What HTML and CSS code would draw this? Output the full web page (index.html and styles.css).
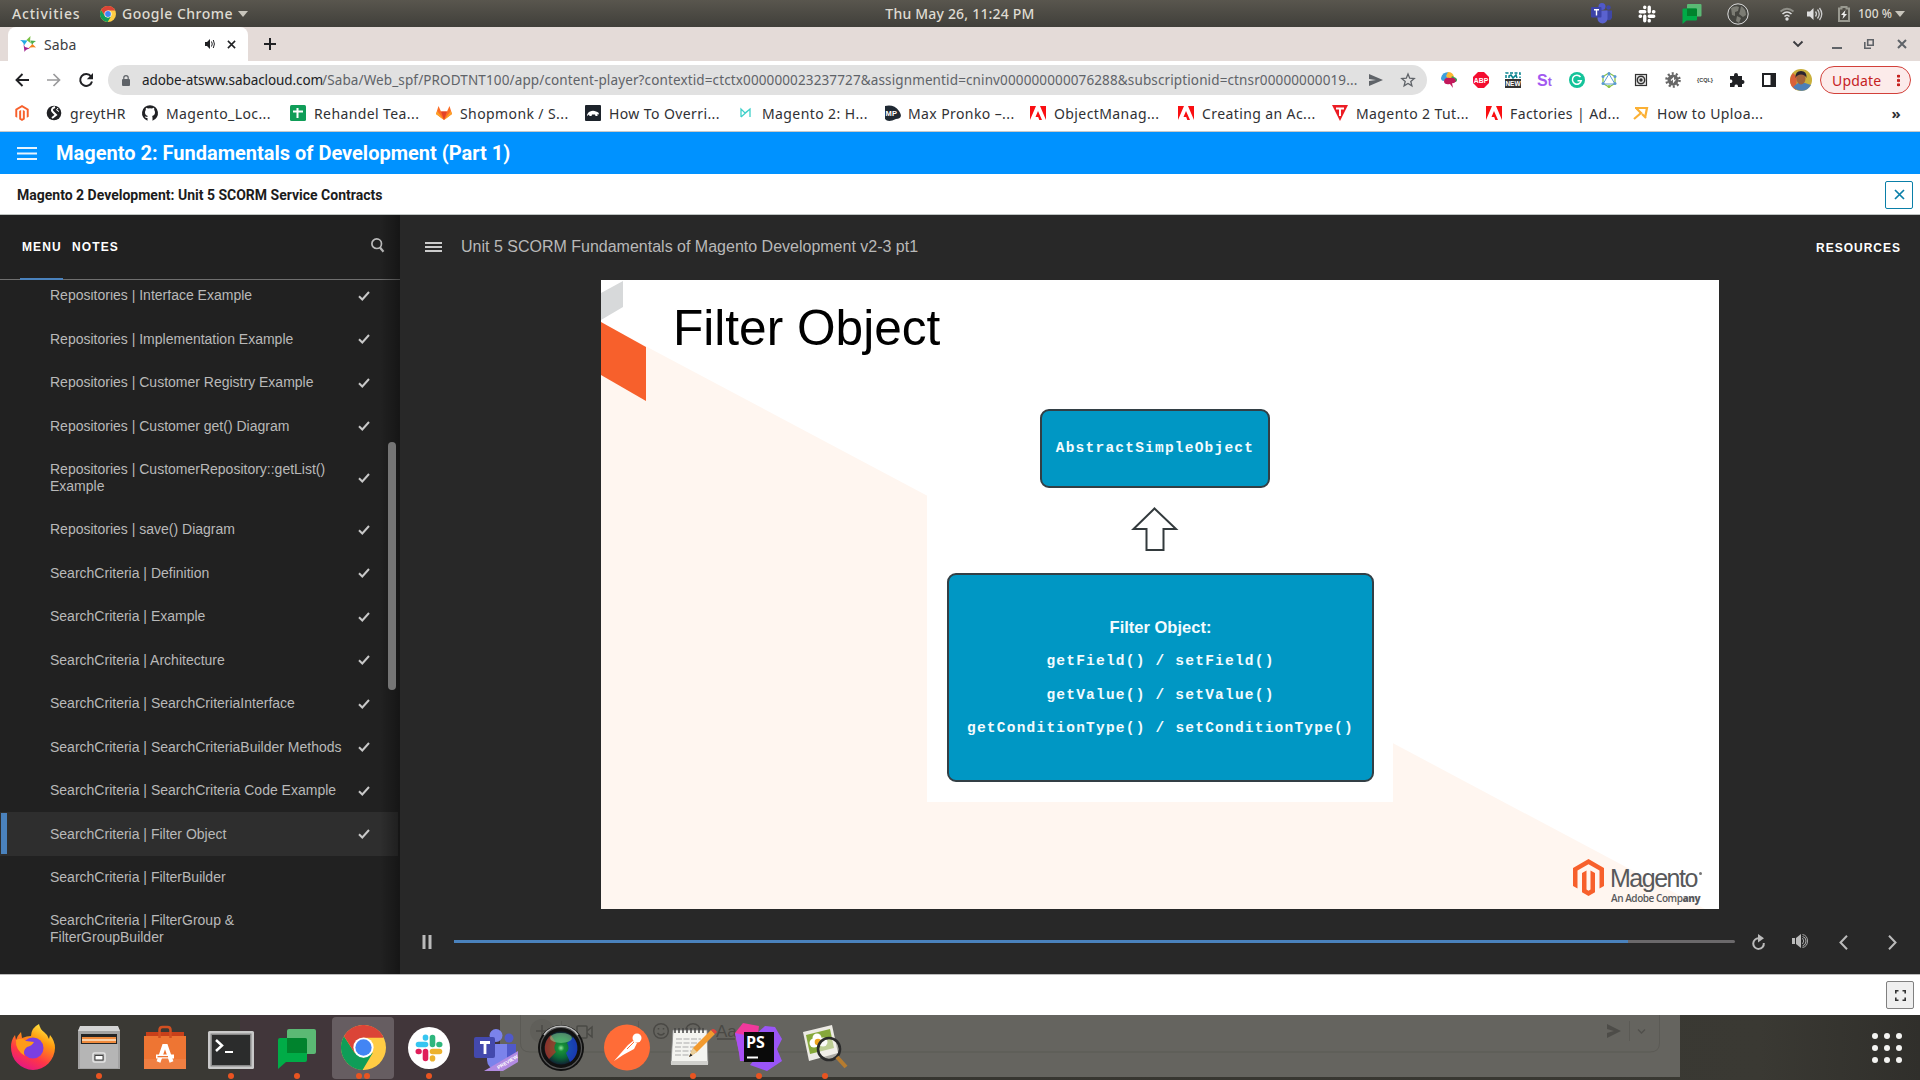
FILE: index.html
```html
<!DOCTYPE html>
<html lang="en">
<head>
<meta charset="utf-8">
<title>Saba</title>
<link rel="stylesheet" href="styles.css">
</head>
<body>
<svg class="defs" width="0" height="0">
  <defs>
    <symbol id="chrome" viewBox="0 0 48 48"><circle cx="24" cy="24" r="24" fill="#fc4"/><path d="M3.200 12A24 24 0 0 0 23 48L34 29.500 24 35 14.500 29.500Z" fill="#0f9d58"/><path d="M3.200 12A24 24 0 0 1 44.800 12V13.500H24L14.500 29.500Z" fill="#db4437"/><circle cx="24" cy="24" r="10.800" fill="#fff"/><circle cx="24" cy="24" r="8.700" fill="#4285f4"/></symbol>
    <symbol id="magento" viewBox="0 0 31 37"><path d="M15.500 0L31 9V27L26.500 29.600V11.500L15.500 5.200 4.500 11.500V29.600L0 27V9Z" fill="#f7602c"/><path d="M9 14L13.500 11.500V30.500L15.500 31.800 17.500 30.500V11.500L22 14V33.200L15.500 37 9 33.200Z" fill="#f7602c"/></symbol>
    <symbol id="adobe" viewBox="0 0 16 16"><path d="M0 1H6L0 15ZM10 1H16V15ZM8 6L12 15H9.300L8.200 12H5.500Z" fill="#fa0f12"/></symbol>
    <symbol id="slack" viewBox="0 0 28 28"><g stroke-width="5.600" stroke-linecap="round"><path d="M10.500 10.500H3.500M10.500 4V3.300" stroke="#36c5f0"/><path d="M17.500 10.500V3.500M24 10.500H24.700" stroke="#2eb67d"/><path d="M17.500 17.500H24.500M17.500 24V24.700" stroke="#ecb22e"/><path d="M10.500 17.500V24.500M4 17.500H3.300" stroke="#e01e5a"/></g></symbol>
    <symbol id="slack-white" viewBox="0 0 28 28"><path d="M10.500 10.500H3.500M10.500 4V3.300M17.500 10.500V3.500M24 10.500H24.700M17.500 17.500H24.500M17.500 24V24.700M10.500 17.500V24.500M4 17.500H3.300" stroke="#fff" stroke-width="5.200" stroke-linecap="round"/></symbol>
    <symbol id="chat" viewBox="0 0 38 40"><rect x="9" y="0" width="29" height="25" rx="2" fill="#5bb974"/><path d="M0 11Q0 9 2 9H27Q29 9 29 11V31Q29 33 27 33H8L0 40Z" fill="#00ac47"/><path d="M9 9H27Q29 9 29 11V24H9Z" fill="#00832d"/></symbol>
    <symbol id="teams" viewBox="0 0 44 44"><circle cx="35" cy="9" r="4.500" fill="#5059c9"/><path d="M29 15H42V29A7 7 0 0 1 29 31Z" fill="#5059c9"/><circle cx="22" cy="6.500" r="6.500" fill="#7b83eb"/><path d="M13 15H33V31A10 10 0 0 1 13 31Z" fill="#7b83eb"/><rect x="0" y="8" width="21" height="21" rx="2" fill="#4349ad"/><path d="M6 13.500H16M11 13.500V25" stroke="#fff" stroke-width="2.800"/></symbol>
    <symbol id="teams-tray" viewBox="0 0 44 44"><circle cx="35" cy="9" r="4.500" fill="#3f47a6"/><path d="M29 15H42V29A7 7 0 0 1 29 31Z" fill="#3f47a6"/><circle cx="22" cy="7" r="7" fill="#5059c9"/><path d="M13 15H33V31A10 10 0 0 1 13 31Z" fill="#5a62cf"/><rect x="0" y="8" width="21" height="21" rx="2" fill="#3d44a8"/><path d="M6 13.500H16M11 13.500V25" stroke="#fff" stroke-width="2.800"/></symbol>
    <symbol id="tick" viewBox="0 0 12 10"><path d="M1 5.200L4.300 8.500 11 1" fill="none" stroke="#c8c8c8" stroke-width="2"/></symbol>
  </defs>
</svg>

<header class="topbar">
  <div class="topbar-left"><span class="activities">Activities</span><svg class="i16"><use href="#chrome"/></svg><span class="appname">Google Chrome</span><i class="caret"></i></div>
  <div class="clock">Thu May 26, 11:24 PM</div>
  <div class="topbar-right">
    <svg class="s-teams"><use href="#teams-tray"/></svg>
    <svg class="s-slack"><use href="#slack-white"/></svg>
    <svg class="s-chat"><use href="#chat"/></svg>
    <svg class="s-globe" viewBox="0 0 22 22"><circle cx="11" cy="11" r="10.200" fill="#454540" stroke="#ddd"/><path d="M4 5Q9 2 12 4L11 8 8 9 8 13 5 12ZM14 3Q19 6 19 12L16 14 12 11 13 8ZM10 13L14 15 12 20 9 18Z" fill="#7c7c74"/></svg>
    <svg class="s-wifi" viewBox="0 0 14 14"><path d="M.5 4.500Q7-1 13.500 4.500" fill="none" stroke="#8f8f88" stroke-width="1.800"/><path d="M2.500 7Q7 3 11.500 7M4.500 9.500Q7 7 9.500 9.500" fill="none" stroke="#ddd" stroke-width="1.600"/><circle cx="7" cy="12" r="1.700" fill="#ddd"/></svg>
    <svg class="s-vol" viewBox="0 0 16 14"><path d="M0 4.500H3L6.500 1V13L3 9.500H0Z" fill="#ddd"/><path d="M8.500 4.500Q10.500 7 8.500 9.500M10.500 2.500Q14 7 10.500 11.500M12.500 1Q17 7 12.500 13" fill="none" stroke="#ccc" stroke-width="1.300"/></svg>
    <svg class="s-bat" viewBox="0 0 12 16"><path d="M1 2.500H3.500V1H8.500V2.500H11V15H1Z" fill="none" stroke="#999990" stroke-width="2"/><path d="M7.500 4L3 9H5.500L4.500 13 9 8H6.500Z" fill="#eee"/></svg>
    <span class="pct">100 %</span><i class="caret"></i>
  </div>
</header>

<div class="tabstrip">
  <div class="tab">
    <svg class="i16" viewBox="0 0 16 16"><path d="M0 4L7.500 4.500 4 9.500Q4 6.500 0 4Z" fill="#23a9e1"/><path d="M6.500 4L10.500 0Q9.500 4 11 7.500Z" fill="#7ac143"/><path d="M10.500 4.500L16 5Q13 6.500 12 9Z" fill="#4cae4c"/><path d="M16 11.500Q12 10.500 8 12.500L12.500 8Z" fill="#f58220"/><path d="M3.500 8L4.500 16Q5.500 13 10 12.500L5 11Z" fill="#a3238e"/></svg>
    <span class="tab-title">Saba</span>
    <svg class="tab-audio" viewBox="0 0 10 10"><path d="M0 3H2L5 0V10L2 7H0Z" fill="#202124"/><path d="M6.500 2.500Q8 5 6.500 7.500M8.300 1Q10.500 5 8.300 9" fill="none" stroke="#202124"/></svg>
    <svg class="tab-close" viewBox="0 0 10 10"><path d="M1 1L9 9M9 1L1 9" stroke="#202124" stroke-width="1.700"/></svg>
  </div>
  <svg class="newtab" viewBox="0 0 12 12"><path d="M6 0V12M0 6H12" stroke="#202124" stroke-width="2"/></svg>
  <div class="winctl">
    <svg class="w-chev" viewBox="0 0 12 8"><path d="M1.500 1.500L6 6 10.500 1.500" fill="none" stroke="#3c3c40" stroke-width="1.900"/></svg>
    <svg class="w-b" viewBox="0 0 10 10"><path d="M0 9H10" stroke="#5f6368" stroke-width="2"/></svg>
    <svg class="w-b" viewBox="0 0 10 10"><path d="M3.700.8H9.200V6.200H3.700ZM.8 3V9.200H7" fill="none" stroke="#5f6368" stroke-width="1.600"/></svg>
    <svg class="w-b" viewBox="0 0 10 10"><path d="M1 1L9 9M9 1L1 9" stroke="#5f6368" stroke-width="2"/></svg>
  </div>
</div>

<div class="toolbar">
  <svg class="nav" viewBox="0 0 14 14"><path d="M14 7H1.500M7.500 1L1.500 7 7.500 13" fill="none" stroke="#202124" stroke-width="1.900"/></svg>
  <svg class="nav" viewBox="0 0 14 14"><path d="M0 7H12.500M6.500 1L12.500 7 6.500 13" fill="none" stroke="#9a9a9c" stroke-width="1.700"/></svg>
  <svg class="nav" viewBox="0 0 14 14"><path d="M12 3.300A6 6 0 1 0 13 8.500" fill="none" stroke="#202124" stroke-width="2"/><path d="M14 0V6.200H7.800Z" fill="#202124"/></svg>
  <div class="omnibox">
    <svg class="lock" viewBox="0 0 8 11"><rect y="4" width="8" height="7" rx="1" fill="#5f6368"/><path d="M1.800 4V2.800A2.200 2.200 0 0 1 6.200 2.800V4" fill="none" stroke="#5f6368" stroke-width="1.200"/></svg>
    <span class="host">adobe-atsww.sabacloud.com</span><span class="path">/Saba/Web_spf/PRODTNT100/app/content-player?contextid=ctctx000000023237727&amp;assignmentid=cninv000000000076288&amp;subscriptionid=ctnsr00000000019...</span>
    <svg class="send" viewBox="0 0 14 12"><path d="M0 0L14 6 0 12V7L7 6 0 5Z" fill="#5f6368"/></svg>
    <svg class="star" viewBox="0 0 14 14"><path d="M7 1L8.700 5.200 13.200 5.500 9.800 8.400 10.900 12.800 7 10.400 3.100 12.800 4.200 8.400.8 5.500 5.300 5.200Z" fill="none" stroke="#5f6368" stroke-width="1.300"/></svg>
  </div>
  <div class="exts">
    <svg viewBox="0 0 16 16"><path d="M0 6Q1 0 8 0V5L3 9Q0 9 0 6" fill="#3d9fdc"/><path d="M7 0Q12 0 13 5L8 8 5 4Z" fill="#fdb833"/><path d="M13 5Q18 7 15 10H9L11 4Z" fill="#3aa757"/><path d="M3 9Q4 5 9 6Q14 5 15 9Q13 12 11 11L12 16 9 12Q3 13 3 9" fill="#c2185b"/></svg>
    <svg viewBox="0 0 16 16"><path d="M5 0H11L16 5V11L11 16H5L0 11V5Z" fill="#f40d30"/><text x="8" y="10.800" class="t-abp">ABP</text></svg>
    <svg viewBox="0 0 16 16"><path d="M1 6V1H15V6" fill="none" stroke="#07838f" stroke-dasharray="3 1.500" stroke-width="1.500"/><path d="M4 6V4L6 3 8 6 11 3 12 6" fill="none" stroke="#07838f" stroke-width="1.500"/><rect y="7" width="16" height="9" fill="#333"/><text x="8" y="14.200" class="t-new">NEW</text></svg>
    <svg viewBox="0 0 16 16"><text x="0" y="13.500" class="t-st">S<tspan font-size="12">t</tspan></text></svg>
    <svg viewBox="0 0 16 16"><circle cx="8" cy="8" r="8" fill="#15c39a"/><path d="M11.500 5A4.500 4.500 0 1 0 12.300 8.700H8.500" fill="none" stroke="#fff" stroke-width="1.500"/></svg>
    <svg viewBox="0 0 16 16"><path d="M8 1L14 4.500V11.500L8 15 2 11.500V4.500Z" fill="none" stroke="#8bc34a" stroke-width="1.300"/><path d="M8 2L14 12H2Z" fill="none" stroke="#5a9bd5"/><g fill="#5a9bd5"><circle cx="8" cy="1.500" r="1.500"/><circle cx="14" cy="4.500" r="1.500"/><circle cx="2" cy="4.500" r="1.500"/><circle cx="2" cy="11.500" r="1.500"/><circle cx="14" cy="11.500" r="1.500"/></g><circle cx="8" cy="14.500" r="1.500" fill="#8bc34a"/></svg>
    <svg viewBox="0 0 16 16"><rect x="2.500" y="2.500" width="11" height="11" fill="#e8e8e8" stroke="#333" stroke-width="1.200"/><circle cx="8" cy="8" r="3.700" fill="none" stroke="#333" stroke-width="1.500"/><circle cx="8" cy="8" r="1.700" fill="#333"/></svg>
    <svg viewBox="0 0 16 16"><circle cx="8" cy="8" r="6.500" fill="none" stroke="#666" stroke-width="2.600" stroke-dasharray="2 2.080"/><circle cx="8" cy="8" r="5.500" fill="#666"/><path d="M6 8.500L8.500 6V10L10.500 7.500" fill="none" stroke="#fff" stroke-width="1.100"/></svg>
    <svg viewBox="0 0 16 16"><text x="8" y="10" class="t-cql">{CQL}</text></svg>
    <svg viewBox="0 0 16 16"><path d="M1 4H5V3A2 2 0 0 1 9 3V4H13V8H13.500A2 2 0 0 1 13.500 12H13V15H9V14A1.800 1.800 0 0 0 5.500 14V15H1V11H2A1.800 1.800 0 0 0 2 7.500H1Z" fill="#202124"/></svg>
    <svg viewBox="0 0 16 16"><path d="M2 2H14V14H2Z" fill="none" stroke="#202124" stroke-width="2"/><path d="M9.500 2H14V14H9.500Z" fill="#202124"/></svg>
    <svg class="avatar" viewBox="0 0 22 22"><circle cx="11" cy="11" r="11" fill="#c9b03c"/><path d="M0 11A11 11 0 0 0 6 21L7 8 3 4A11 11 0 0 0 0 11" fill="#d9603a"/><path d="M3 18L8 14 15 14 21 16A11 11 0 0 1 3 18" fill="#4d7fb8"/><ellipse cx="11" cy="9.500" rx="4.500" ry="6" fill="#a3653c"/><path d="M5.500 9Q5 2 11 2T16.500 9Q15 5.500 11 5.500T5.500 9" fill="#2a2430"/></svg>
  </div>
  <div class="update"><span>Update</span><i class="dots"></i></div>
</div>

<nav class="bookmarks">
  <a><svg class="bm-mag"><use href="#magento"/></svg></a>
  <a><svg viewBox="0 0 16 16"><circle cx="8" cy="8" r="7.300" fill="#202124"/><path d="M9 2Q4 4 7 7T10 10 6 13" fill="none" stroke="#fff" stroke-width="2"/><path d="M12 3L10.500 5 13 6.500" stroke="#fff" fill="none"/></svg><span>greytHR</span></a>
  <a><svg viewBox="0 0 16 16"><path d="M8 .2A8 8 0 0 0 5.500 15.800V13Q3.500 13.400 2.700 11.500 3.600 11.300 5.500 12Q5 11.500 5.900 11Q3 10.500 3 7.300 3 6 3.800 5 3.500 4 4 2.700 5 2.800 6 3.500 8 3 10 3.500 11 2.800 12 2.700 12.500 4 12.200 5 13 6 13 7.300 13 10.500 10.100 11 10.500 11.500 10.500 13V15.800A8 8 0 0 0 8 .2" fill="#202124"/></svg><span>Magento_Loc...</span></a>
  <a><svg viewBox="0 0 16 16"><rect width="16" height="16" rx="1.500" fill="#0f9d58"/><path d="M7.500 3V13M3 6.500H13" stroke="#fff" stroke-width="2"/></svg><span>Rehandel Tea...</span></a>
  <a><svg viewBox="0 0 16 16"><path d="M8 15L0 9 2.500 1 5 6.500H11L13.500 1 16 9Z" fill="#fc6d26"/><path d="M8 15L5 6.500H11Z" fill="#e24329"/><path d="M0 9L1.200 6 8 15ZM16 9L14.800 6 8 15Z" fill="#fca326"/></svg><span>Shopmonk / S...</span></a>
  <a><svg viewBox="0 0 16 16"><rect width="16" height="16" rx="1" fill="#1d232b"/><path d="M2 11Q2 8 5 6.500T11 6.500Q14 7 14 9.500L12.500 9V11H10.500L10 9.500H7L6.500 11H4.500L4 9.500Z" fill="#fff"/></svg><span>How To Overri...</span></a>
  <a><svg viewBox="0 0 16 16"><path d="M3 12V4L7 8 12 4V12M3 12L12 4" fill="none" stroke="#3fd0c9" stroke-width="1.300"/></svg><span>Magento 2: H...</span></a>
  <a><svg viewBox="0 0 16 16"><path d="M1 1Q10-1 15 6T12 14Q4 18 1 14Z" fill="#1f2933"/><text x="7.500" y="11" class="t-mp">MP</text></svg><span>Max Pronko –...</span></a>
  <a><svg><use href="#adobe"/></svg><span>ObjectManag...</span></a>
  <a><svg><use href="#adobe"/></svg><span>Creating an Ac...</span></a>
  <a><svg viewBox="0 0 16 16"><path d="M0 0H16L8 16Z" fill="#ec1c24"/><path d="M4 3.500H12M8 3.500V11" stroke="#fff" stroke-width="2"/></svg><span>Magento 2 Tut...</span></a>
  <a><svg><use href="#adobe"/></svg><span>Factories | Ad...</span></a>
  <a><svg viewBox="0 0 16 16"><path d="M2 3H14L12 13M1 14L8 8 3.500 3.500M9 9L13 13" fill="none" stroke="#fbb034" stroke-width="2.200"/></svg><span>How to Uploa...</span></a>
  <span class="more">»</span>
</nav>

<div class="course-bar">
  <svg class="burger4" viewBox="0 0 20 13"><path d="M0 1H20M0 6.500H20M0 12H20" stroke="#e6f4ff" stroke-width="2"/></svg>
  <h1>Magento 2: Fundamentals of Development (Part 1)</h1>
</div>
<div class="unit-bar">
  <h2>Magento 2 Development: Unit 5 SCORM Service Contracts</h2>
  <button class="close-btn"><svg viewBox="0 0 11 11"><path d="M1 1L10 10M10 1L1 10" stroke="#0a7fa8" stroke-width="1.700"/></svg></button>
</div>

<main class="player">
  <aside class="sidebar">
    <div class="side-head">
      <span class="stab on">MENU</span><span class="stab">NOTES</span>
      <svg class="search" viewBox="0 0 14 15"><circle cx="5.700" cy="5.700" r="4.800" fill="none" stroke="#bbb" stroke-width="1.700"/><path d="M9 9.500L12.500 13.700" stroke="#bbb" stroke-width="2.200"/></svg>
    </div>
    <div class="side-scroll">
      <ul class="items">
        <li><span>Repositories | Interface Example</span><svg><use href="#tick"/></svg></li>
        <li><span>Repositories | Implementation Example</span><svg><use href="#tick"/></svg></li>
        <li><span>Repositories | Customer Registry Example</span><svg><use href="#tick"/></svg></li>
        <li><span>Repositories | Customer get() Diagram</span><svg><use href="#tick"/></svg></li>
        <li><span>Repositories | CustomerRepository::getList() Example</span><svg><use href="#tick"/></svg></li>
        <li><span>Repositories | save() Diagram</span><svg><use href="#tick"/></svg></li>
        <li><span>SearchCriteria | Definition</span><svg><use href="#tick"/></svg></li>
        <li><span>SearchCriteria | Example</span><svg><use href="#tick"/></svg></li>
        <li><span>SearchCriteria | Architecture</span><svg><use href="#tick"/></svg></li>
        <li><span>SearchCriteria | SearchCriteriaInterface</span><svg><use href="#tick"/></svg></li>
        <li><span>SearchCriteria | SearchCriteriaBuilder Methods</span><svg><use href="#tick"/></svg></li>
        <li><span>SearchCriteria | SearchCriteria Code Example</span><svg><use href="#tick"/></svg></li>
        <li class="current"><span>SearchCriteria | Filter Object</span><svg><use href="#tick"/></svg></li>
        <li><span>SearchCriteria | FilterBuilder</span></li>
        <li><span>SearchCriteria | FilterGroup &amp;<br>FilterGroupBuilder</span></li>
      </ul>
    </div>
    <i class="side-shade"></i>
    <i class="side-thumb"></i>
  </aside>
  <section class="stage">
    <div class="stage-head">
      <svg class="burger3" viewBox="0 0 17 10"><path d="M0 1H17M0 5H17M0 9H17" stroke="#ccc" stroke-width="2"/></svg>
      <span class="stage-title">Unit 5 SCORM Fundamentals of Magento Development v2-3 pt1</span>
      <span class="resources">RESOURCES</span>
    </div>
    <div class="slide">
      <svg class="slide-bg" viewBox="0 0 1118 629"><path d="M0 42.400L1104 629H0Z" fill="#fff6f0"/><path d="M326 100H792V522H326Z" fill="#fff"/><path d="M0 13L22 1V27L0 40Z" fill="#d7d9da"/><path d="M0 42L45 67V121L0 95Z" fill="#f7602c"/><path d="M553.500 228.500L575 249H562.500V270H545.500V249H532.500Z" fill="#fff" stroke="#333a3d" stroke-width="2"/></svg>
      <h3 class="slide-title">Filter Object</h3>
      <div class="node node-a">AbstractSimpleObject</div>
      <div class="node node-b"><b>Filter Object:</b><p>getField() / setField()</p><p>getValue() / setValue()</p><p>getConditionType() / setConditionType()</p></div>
      <div class="brand">
        <svg class="brand-mark"><use href="#magento"/></svg>
        <div class="brand-text"><span class="brand-name">Magento<i></i></span><span class="brand-sub">An Adobe Comp<b>any</b></span></div>
      </div>
    </div>
    <div class="controls">
      <svg class="c-pause" viewBox="0 0 10 14"><path d="M2 0V14M8 0V14" stroke="#bbb" stroke-width="3"/></svg>
      <div class="track"><i></i></div>
      <svg class="c-replay" viewBox="0 0 13 16"><path d="M7 4.300A5.300 5.300 0 1 0 11.800 9" fill="none" stroke="#bbb" stroke-width="2"/><path d="M6 0L12 4.300 6 8.500Z" fill="#bbb"/></svg>
      <svg class="c-vol" viewBox="0 0 16 14"><path d="M0 4H3V10H0ZM4 4L9 0V14L4 10Z" fill="#bbb"/><path d="M10.500 4Q13 7 10.500 10M10.500 .5Q15.500 1.500 15.500 7T10.500 13.500M10.500 2.500Q14 3 14 7T10.500 12" fill="none" stroke="#aaa"/></svg>
      <svg class="c-arr" viewBox="0 0 9 15"><path d="M8 .8L1.500 7.500 8 14.200" fill="none" stroke="#bbb" stroke-width="2"/></svg>
      <svg class="c-arr" viewBox="0 0 9 15"><path d="M1 .8L7.500 7.500 1 14.200" fill="none" stroke="#bbb" stroke-width="2"/></svg>
    </div>
  </section>
</main>

<footer class="foot-bar"><button class="full-btn"><svg viewBox="0 0 11 11"><path d="M.8 3.500V.8H3.500M7.500.8H10.200V3.500M10.200 7.500V10.200H7.500M3.500 10.200H.8V7.500" fill="none" stroke="#333" stroke-width="1.600"/></svg></button></footer>

<div class="dock">
  <svg class="ghost" viewBox="0 0 1180 62"><path d="M20.500 0V28Q20.500 37 30 37H1150Q1159.500 37 1159.500 28V0" fill="none" stroke="#5b5a55"/><circle cx="42" cy="16" r="12" fill="#605f5a"/><g fill="none" stroke="#4a4945" stroke-width="1.500"><path d="M36 16H48M42 10V22"/><rect x="77" y="11" width="10" height="12" rx="1"/><path d="M87 16L92 12V22L87 18"/><circle cx="161" cy="16" r="7.300"/><path d="M157.500 18Q161 22 164.500 18M158.500 13V14.500M163.500 13V14.500"/><circle cx="193" cy="16" r="7.300"/><path d="M217 24H235"/></g><path d="M61.500 6V26M138.500 6V26M1129.500 6V26" stroke="#5b5a55"/><text x="216" y="22" class="t-aa">Aa</text><path d="M1107 9L1121 16 1107 23V18L1114 16 1107 14Z" fill="#4d4c48"/><path d="M1138 14.500L1141.500 18 1145 14.500" fill="none" stroke="#504f4b" stroke-width="1.300"/></svg>
  <div class="dock-items">
    <div><svg viewBox="0 0 48 48"><defs><linearGradient id="ff" x1="0.800" y1="0" x2="0.300" y2="1"><stop offset="0" stop-color="#fff14a"/><stop offset=".35" stop-color="#ff980e"/><stop offset=".7" stop-color="#ff3647"/><stop offset="1" stop-color="#e31587"/></linearGradient></defs><path d="M24 47A22.500 22.500 0 0 1 2 24Q2 17 6 12L7 17Q8 13 12 9L13 15Q18 13 22 13Q22 5 30 1Q31 6 35 9T40 16L41 12Q46 18 46 25A22.500 22.500 0 0 1 24 47" fill="url(#ff)"/><circle cx="24" cy="25" r="10.500" fill="#7b3fe0"/><path d="M7 17Q13 14 17 18L25 19Q23 23 18 24 13 28 16 33Q6 27 7 17" fill="#ff9b1a"/></svg></div>
    <div class="run"><svg viewBox="0 0 48 48"><path d="M5 4H43L45 8V46H3V8Z" fill="#a3a3a3"/><path d="M5 3H43L45 8H3Z" fill="#d4d4d4"/><rect x="6" y="11" width="36" height="11" fill="#252525"/><path d="M7 14H41V20H7Z" fill="#f08a3c"/><path d="M7 17H41" stroke="#fbe6cc" stroke-width="1.500"/><path d="M5 21H43V45H5Z" fill="#b5b5b5"/><rect x="18" y="30" width="12" height="9" rx="1.500" fill="#9a9a9a" stroke="#e4e4e4" stroke-width="1.600"/><path d="M20 32.500H28V37H20Z" fill="#fff" stroke="#444"/></svg></div>
    <div><svg viewBox="0 0 48 48"><path d="M5 9H43V16H5Z" fill="#c8401a"/><path d="M3 13H45V46H3Z" fill="#ee7533"/><path d="M3 36H45V46H3Z" fill="#f07f42"/><path d="M18.500 15V7Q18.500 4 21.500 4H26.500Q29.500 4 29.500 7V15" fill="none" stroke="#d24f21" stroke-width="2.500"/><path d="M17.500 39L23 23H25L30.500 39" fill="none" stroke="#fff" stroke-width="4"/><path d="M15 31.500H33V35.500H15Z" fill="#fff"/><path d="M16.500 33H27V34.300H16.500Z" fill="#ee7533"/></svg></div>
    <div class="run"><svg viewBox="0 0 48 48"><rect x="1" y="8" width="46" height="38" rx="1.500" fill="#c9c9c9"/><rect x="3.500" y="10.500" width="41" height="33" fill="#888"/><rect x="5" y="12" width="38" height="30" fill="#2b2c2c"/><path d="M9 17L15 22.500 9 28" fill="none" stroke="#fff" stroke-width="2.500"/><path d="M18 29H26" stroke="#fff" stroke-width="2"/></svg></div>
    <div class="run"><svg class="d-chat"><use href="#chat"/></svg></div>
    <div class="run two active"><svg class="d-chrome"><use href="#chrome"/></svg></div>
    <div class="run"><span class="slack-disc"><svg><use href="#slack"/></svg></span></div>
    <div><svg viewBox="0 0 48 48"><use href="#teams" x="3" y="6" width="44" height="44"/><path d="M13 48L47 28V39L32 48Z" fill="#b28be2"/><text class="t-prev" transform="translate(27.500 46.500) rotate(-31)">PREVIEW</text></svg></div>
    <div><svg viewBox="0 0 48 48"><defs><radialGradient id="lens"><stop offset="0" stop-color="#8ee59b"/><stop offset=".2" stop-color="#188f38"/><stop offset=".6" stop-color="#0b6a38"/><stop offset="1" stop-color="#123"/></radialGradient></defs><circle cx="24" cy="25" r="23" fill="#111"/><circle cx="24" cy="25" r="20.500" fill="none" stroke="#555" stroke-width="1.200"/><path d="M7 12A21 21 0 0 1 41 12" fill="none" stroke="#bbb" stroke-width="1.500"/><circle cx="24" cy="25" r="16.500" fill="url(#lens)"/><path d="M14 12A16.500 16.500 0 0 0 12 36L19 29A7 7 0 0 1 19 20Z" fill="#b3362a" opacity=".75"/><path d="M36 14A16.500 16.500 0 0 1 33 39L29 30A7 7 0 0 0 30 20Z" fill="#1b3fd0" opacity=".8"/><ellipse cx="24" cy="15" rx="11" ry="5" fill="#8fe0a0" opacity=".5"/></svg></div>
    <div><svg viewBox="0 0 48 48"><circle cx="24" cy="24.500" r="23" fill="#ff6c37"/><path d="M11 38L25 22 30 18 34 20 31 26 20 32Z" fill="#fff"/><circle cx="34" cy="15" r="4.500" fill="#fff"/><path d="M24 26L31 19" stroke="#ff6c37"/></svg></div>
    <div class="run"><svg viewBox="0 0 48 48"><path d="M4 7H38L39 41H2Z" fill="#f4f4f0" stroke="#888" stroke-width=".8"/><path d="M2 38H39V42H2Z" fill="#d0d0cc"/><path d="M6 10V5M10 10V5M14 10V5M18 10V5M22 10V5M26 10V5M30 10V5M34 10V5" stroke="#444" stroke-width="1.500"/><path d="M7 16H32M7 20H30M6 24H27M6 28H24M6 32H23" stroke="#aaa" stroke-dasharray="6 1.500"/><path d="M20 34L24 25 42 7 46 11 28 29Z" fill="#f29a2e"/><path d="M20 34L24 25 28 29Z" fill="#e8cf9c"/><path d="M20 34L21.500 30.500 23.500 32.500Z" fill="#222"/><path d="M42 7Q45 4 48 9L46 11Z" fill="#e0443e"/></svg></div>
    <div class="run"><svg viewBox="0 0 48 48"><path d="M0 10L8 0 24 3 22 20 6 38Z" fill="#f0399c"/><path d="M0 10L10 12V38H5L4 30Z" fill="#a950f5"/><path d="M22 10L30 3 40 4 47 16 42 26 47 38 32 48 15 42 20 36Z" fill="#9a55f7"/><rect x="9" y="9" width="30" height="30" fill="#0a0a0a"/><text x="11" y="25" class="t-ps">PS</text><path d="M12 34.500H23" stroke="#fff" stroke-width="2"/></svg></div>
    <div class="run"><svg viewBox="0 0 48 48"><path d="M2 9L31 2 37 30 8 38Z" fill="#eceae4"/><path d="M5 12L29 6 33 25 9 31Z" fill="#86a83a"/><g fill="#fff"><circle cx="16" cy="15" r="4.500"/><circle cx="22" cy="19" r="4.500"/><circle cx="13" cy="20" r="4.500"/></g><circle cx="17" cy="19" r="3.300" fill="#eda41e"/><circle cx="28" cy="26" r="11" fill="#f6f4ee" fill-opacity=".5" stroke="#2b2b2b" stroke-width="2.600"/><path d="M36 34L45 44" stroke="#b67c30" stroke-width="4"/></svg></div>
  </div>
  <svg class="grid9" viewBox="0 0 30 30"><g fill="#f4f4f2"><circle cx="3" cy="3" r="3"/><circle cx="15" cy="3" r="3"/><circle cx="27" cy="3" r="3"/><circle cx="3" cy="15" r="3"/><circle cx="15" cy="15" r="3"/><circle cx="27" cy="15" r="3"/><circle cx="3" cy="27" r="3"/><circle cx="15" cy="27" r="3"/><circle cx="27" cy="27" r="3"/></g></svg>
</div>
</body>
</html>
```
FILE: styles.css
```css
* { box-sizing: border-box; }
body { margin: 0; width: 1920px; height: 1080px; overflow: hidden; display: flex; flex-direction: column; font-family: "Noto Sans", sans-serif; background: #fff; }
h1, h2, h3, p, ul { margin: 0; padding: 0; }
svg { display: block; flex: none; overflow: visible; }
.defs { position: absolute; }
.i16 { width: 16px; height: 16px; }
button { padding: 0; }

/* system bar */
.topbar { height: 27px; flex: none; display: grid; grid-template-columns: 1fr auto 1fr; align-items: center; background: linear-gradient(#59564e, #403f3a); color: #dfdbd2; font-size: 14px; font-weight: 500; white-space: nowrap; }
.topbar-left { display: flex; align-items: center; padding-left: 12px; }
.activities { width: 88px; letter-spacing: 0.800px; }
.appname { width: 110px; margin-left: 6px; letter-spacing: 0.500px; }
.caret { border: 5px solid transparent; border-top: 6px solid #c8c5bc; border-bottom: 0; margin-left: 6px; }
.clock { font-size: 14px; letter-spacing: 0.200px; }
.topbar-right { display: flex; align-items: center; justify-content: flex-end; padding-right: 15px; }
.s-teams { width: 22px; height: 22px; margin-right: 25px; }
.s-slack { width: 18px; height: 18px; margin-right: 26px; }
.s-chat { width: 20px; height: 20px; margin-right: 25px; }
.s-globe { width: 22px; height: 22px; margin-right: 31px; }
.s-wifi { width: 14px; height: 14px; margin-right: 13px; }
.s-vol { width: 16px; height: 14px; margin-right: 15px; }
.s-bat { width: 12px; height: 16px; margin-right: 8px; }
.pct { width: 33px; font-size: 12px; }
.topbar-right .caret { margin-left: 4px; }

/* tabs */
.tabstrip { height: 34px; flex: none; display: flex; align-items: center; background: #e4dbd8; padding-left: 8px; }
.tab { width: 240px; height: 34px; background: #fff; border-radius: 8px 8px 0 0; display: flex; align-items: center; padding: 0 12px; color: #3c4043; }
.tab-title { flex: 1; margin-left: 8px; font-size: 14px; letter-spacing: 0.100px; }
.tab-audio { width: 10px; height: 10px; margin-right: 12px; }
.tab-close { width: 9px; height: 9px; }
.newtab { width: 12px; height: 12px; margin-left: 16px; }
.winctl { margin-left: auto; display: flex; align-items: center; padding-right: 13px; gap: 22px; }
.w-chev { width: 12px; height: 8px; margin-right: 6px; }
.w-b { width: 10px; height: 10px; }
.w-b:last-child { margin-left: 1px; }

/* toolbar */
.toolbar { height: 38px; flex: none; display: flex; align-items: center; padding: 0 9px 0 15px; }
.nav { width: 14px; height: 14px; margin-right: 18px; }
.nav + .nav + .nav { margin-right: 15px; }
.omnibox { width: 1319px; height: 30px; border-radius: 15px; background: #e1e1e1; display: flex; align-items: center; padding: 0 12px 0 14px; font-size: 13.500px; white-space: nowrap; color: #202124; }
.lock { width: 8px; height: 11px; margin-right: 12px; }
.host { width: 180px; letter-spacing: -0.080px; }
.path { flex: 1; color: #5f6368; letter-spacing: 0.125px; }
.send { width: 14px; height: 12px; margin-right: 18px; }
.star { width: 14px; height: 14px; }
.exts { display: flex; align-items: center; gap: 16px; margin-left: 14px; }
.exts svg { width: 16px; height: 16px; }
.exts .avatar { width: 22px; height: 22px; margin-left: -3px; }
.update { margin-left: auto; width: 91px; height: 28px; border: 1px solid #d2403a; border-radius: 14px; background: #fcebea; color: #c5221f; display: flex; align-items: center; justify-content: space-between; padding: 0 10px 0 11px; font-size: 14px; letter-spacing: 0.200px; }
.dots { width: 3px; height: 13px; background: radial-gradient(circle, #c5221f 1.400px, transparent 1.800px) 0 0 / 3px 4.333px; }
.t-abp { font: bold 6.800px "Liberation Sans", sans-serif; fill: #fff; text-anchor: middle; }
.t-new { font: bold 6.500px "Liberation Sans", sans-serif; fill: #fff; text-anchor: middle; }
.t-st { font: bold 16px "Liberation Sans", sans-serif; fill: #a259f0; }
.t-cql { font: bold 5.500px "Liberation Sans", sans-serif; fill: #444; text-anchor: middle; }
.t-mp { font: bold 7.500px "Liberation Sans", sans-serif; fill: #fff; text-anchor: middle; }

/* bookmarks */
.bookmarks { height: 33px; flex: none; border-bottom: 1px solid #c9c9c9; display: grid; grid-template-columns: 32px 96px 148px 146px 149px 153px 146px 146px 148px 154px 154px 147px 1fr auto; align-items: center; padding: 0 19px 4px 14px; font-size: 14px; letter-spacing: 0.400px; color: #303134; white-space: nowrap; }
.bookmarks a { display: flex; align-items: center; gap: 8px; }
.bookmarks a svg { width: 16px; height: 16px; }
.more { font-size: 15px; font-weight: bold; }

/* course header */
.course-bar { height: 42px; flex: none; background: #0092ff; display: flex; align-items: center; padding-left: 17px; color: #fff; }
.burger4 { width: 20px; height: 13px; margin-right: 19px; }
h1 { font: 700 20px Roboto, sans-serif; }
.unit-bar { height: 41px; flex: none; border-bottom: 1px solid #bfc4c2; display: flex; align-items: center; justify-content: space-between; padding: 0 7px 0 17px; }
h2 { font: 700 14px Roboto, sans-serif; color: #1c1c1c; padding-top: 2px; }
.close-btn { width: 28px; height: 28px; margin-top: 1px; border: 1px solid #0a7fa8; border-radius: 2px; background: #fff; display: grid; place-items: center; }
.close-btn svg { width: 11px; height: 11px; }

/* player */
.player { height: 759px; flex: none; display: flex; background: #282828; font-family: "Liberation Sans", Arial, sans-serif; }
.sidebar { width: 400px; background: #212121; position: relative; display: flex; flex-direction: column; }
.side-head { height: 65px; flex: none; border-bottom: 1px solid #6f6f6f; display: flex; padding: 0 15px 0 20px; color: #fff; font-size: 12px; font-weight: bold; letter-spacing: 1.100px; line-height: 64px; }
.stab { padding-left: 2px; height: 65px; }
.stab.on { width: 43px; border-bottom: 2px solid #4a82bd; }
.stab:nth-child(2) { padding-left: 9px; }
.search { width: 14px; height: 15px; margin: 23px 0 0 auto; }
.side-scroll { height: 680px; margin-top: 10px; overflow: hidden; }
.items { list-style: none; margin-top: -16px; font-size: 14px; line-height: 16.800px; color: #b9b9b9; }
.items li { display: flex; align-items: center; justify-content: space-between; padding: 13.330px 30px 13.330px 50px; width: 400px; }
.items li svg { width: 12px; height: 10px; }
.items li span { max-width: 295px; }
.items .current { background: linear-gradient(90deg, #4a82bd, #4a82bd) 1px 1px / 6px 41px no-repeat #2e2e2e; width: 398px; padding-right: 28px; }
.side-shade { position: absolute; top: 0; bottom: 0; right: 0; width: 20px; background: linear-gradient(90deg, transparent, rgba(0, 0, 0, 0.350)); }
.side-thumb { position: absolute; top: 227px; right: 4px; width: 8px; height: 248px; border-radius: 4px; background: #757575; }

.stage { flex: 1; display: flex; flex-direction: column; }
.stage-head { height: 65px; flex: none; display: flex; align-items: center; padding: 0 19px 2px 25px; }
.burger3 { width: 17px; height: 10px; margin: 1px 19px 0 0; }
.stage-title { font-size: 16px; color: #b9b9b9; }
.resources { margin: 3px 0 0 auto; font-size: 12px; font-weight: bold; letter-spacing: 1px; color: #fff; }
.slide { position: relative; width: 1118px; height: 629px; margin-left: 201px; background: #fff; overflow: hidden; }
.slide-bg { position: absolute; inset: 0; width: 1118px; height: 629px; }
.slide-title { position: relative; padding: 20px 0 0 72px; font-size: 49.600px; font-weight: normal; line-height: 56px; color: #000; }
.node { position: absolute; border: 2px solid #333f45; border-radius: 9px; background: #0097c4; color: #f3fbfe; display: flex; flex-direction: column; align-items: center; justify-content: center; font: bold 14.500px/33.400px "Liberation Mono", monospace; letter-spacing: 1.220px; white-space: nowrap; }
.node-a { left: 439px; top: 129px; width: 230px; height: 79px; padding-top: 1px; }
.node-b { left: 346px; top: 293px; width: 427px; height: 209px; }
.node-b p { position: relative; top: 1px; }
.node-b b { font: bold 16.500px/33.400px "Liberation Sans", Arial, sans-serif; letter-spacing: 0; }
.brand { position: absolute; left: 972px; top: 579px; display: flex; gap: 6px; }
.brand-mark { width: 31px; height: 37px; }
.brand-text { display: flex; flex-direction: column; color: #58595b; }
.brand-name { font-size: 25px; line-height: 28px; letter-spacing: -1.500px; padding-top: 5px; }
.brand-name i { display: inline-block; width: 3px; height: 3px; border-radius: 2px; background: #777; vertical-align: 12px; margin-left: 2px; }
.brand-sub { font: 600 10px/12px "Open Sans", sans-serif; letter-spacing: -0.450px; padding-left: 1px; white-space: nowrap; }
.controls { flex: 1; display: flex; align-items: center; padding: 0 23px 0 22px; margin-top: 2px; }
.c-pause { width: 10px; height: 14px; margin: -2px 22px 0 0; }
.track { width: 1281px; height: 3px; background: #6b696b; border-radius: 2px; margin-top: -2px; }
.track i { display: block; height: 3px; width: 1174px; background: #4a82bd; }
.c-replay { width: 13px; height: 16px; margin: -2px 27px 0 17px; }
.c-vol { width: 16px; height: 14px; margin: -3px 31px 0 0; }
.c-arr { width: 9px; height: 15px; }
.c-arr + .c-arr { margin-left: auto; }

.foot-bar { height: 41px; flex: none; border-top: 1px solid #bbb; display: flex; justify-content: flex-end; padding: 6px 6px 0 0; }
.full-btn { width: 28px; height: 28px; border: 1px solid #808080; border-radius: 2px; background: #efefef; display: grid; place-items: center; }
.full-btn svg { width: 11px; height: 11px; }

/* dock */
.dock { position: relative; flex: 1; display: flex; justify-content: space-between; background: linear-gradient(90deg, #3a3934 240px, #41363a 240px, #41363a 500px, #35342f 500px, #3a3933 1760px, #302f2b 1920px); }
.ghost { position: absolute; left: 500px; top: 0; width: 1180px; height: 62px; background: #65645f; }
.dock-items { position: relative; display: flex; }
.dock-items > div { width: 66px; height: 65px; padding-top: 8px; display: flex; justify-content: center; position: relative; }
.dock-items svg { width: 48px; height: 48px; }
.dock-items .d-chat { width: 38px; height: 40px; margin-top: 6px; }
.dock-items .d-chrome { width: 45px; height: 45px; margin-top: 2px; }
.dock-items .active { width: 62px; height: 62px; margin: 2px; padding-top: 6px; background: #665d61; border-radius: 4px; }
.slack-disc { width: 42px; height: 42px; margin-top: 4px; border-radius: 50%; background: #fff; display: grid; place-items: center; }
.dock-items .slack-disc svg { width: 28px; height: 28px; }
.run::after { content: ""; position: absolute; left: 30px; bottom: 1px; width: 6px; height: 6px; border-radius: 3px; background: #e95420; }
.two::after { left: 24px; bottom: 0; box-shadow: 8px 0 #e95420; }
.grid9 { width: 30px; height: 30px; margin: 18px 18px 0 0; }
.t-aa { font: 17px "Liberation Sans", sans-serif; fill: #4a4945; }
.t-prev { font: bold 5px "Liberation Sans", sans-serif; fill: #fff; }
.t-ps { font: bold 16px "Open Sans", sans-serif; fill: #fff; }
```
